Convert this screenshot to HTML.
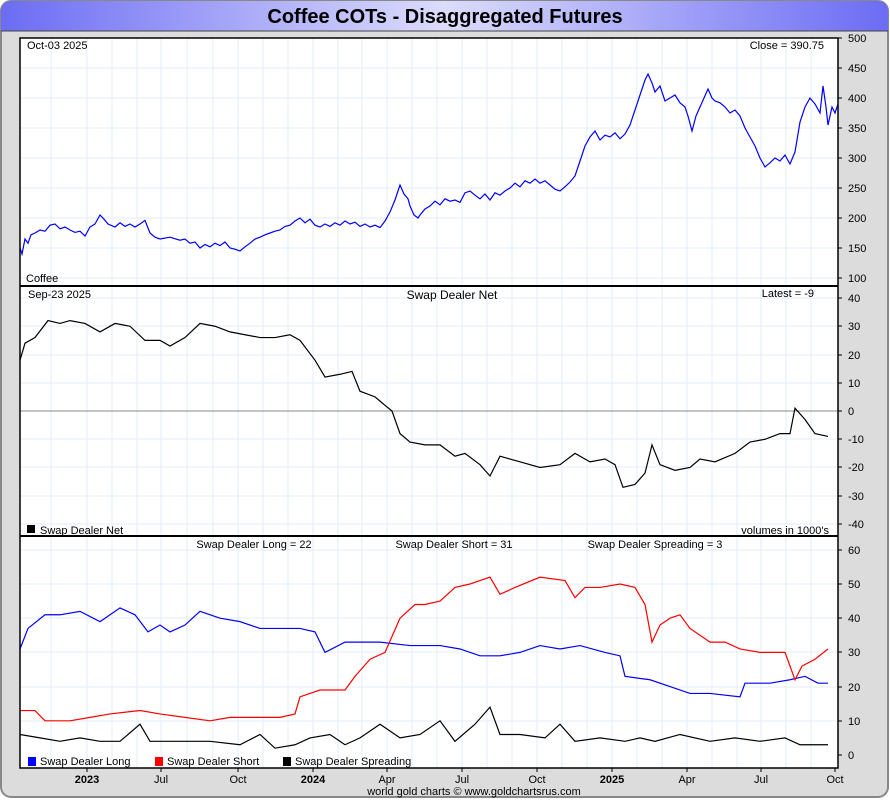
<!DOCTYPE html>
<html><head><meta charset="utf-8"><style>
body{margin:0;background:#fff;width:890px;height:800px;overflow:hidden;font-family:"Liberation Sans",sans-serif}
svg text{font-family:"Liberation Sans",sans-serif;font-size:11px;fill:#000}
</style></head><body>
<svg width="890" height="800" xmlns="http://www.w3.org/2000/svg">
<defs>
<linearGradient id="tg" x1="0" x2="1" y1="0" y2="0">
<stop offset="0" stop-color="#6c6cf4"/><stop offset="0.5" stop-color="#dcdcfc"/><stop offset="1" stop-color="#6c6cf4"/>
</linearGradient>
</defs>
<rect x="1" y="1" width="887" height="796" rx="10" fill="#dcdcdc" stroke="#888" stroke-width="2"/>
<path d="M1,31 V11 a10,10 0 0 1 10,-10 H878 a10,10 0 0 1 10,10 V31 Z" fill="url(#tg)"/>
<line x1="1" y1="31" x2="888" y2="31" stroke="#444" stroke-width="1"/>
<text x="445" y="23" text-anchor="middle" style="font-size:20px;font-weight:bold">Coffee COTs - Disaggregated Futures</text>
<rect x="20" y="38" width="818" height="730" fill="#fff"/>
<g stroke="#e2eef8" stroke-width="1">
<path d="M51,38V768M87,38V768M112,38V768M137,38V768M161,38V768M187,38V768M213,38V768M238,38V768M263,38V768M288,38V768M313,38V768M338,38V768M362,38V768M387,38V768M412,38V768M437,38V768M462,38V768M487,38V768M512,38V768M537,38V768M562,38V768M587,38V768M612,38V768M637,38V768M662,38V768M687,38V768M712,38V768M737,38V768M761,38V768M786,38V768M811,38V768"/>
<path d="M20,68H838M20,98H838M20,128H838M20,158H838M20,188H838M20,218H838M20,248H838M20,278H838"/>
<path d="M20,298H838M20,326H838M20,355H838M20,383H838M20,439H838M20,467H838M20,496H838M20,524H838"/>
<path d="M20,550H838M20,584H838M20,618H838M20,652H838M20,687H838M20,721H838"/>
</g>
<line x1="20" y1="411" x2="838" y2="411" stroke="#888"/>
<g fill="none" stroke-width="1.2">
<g transform="translate(0,338) scale(1,-0.6)"><polyline stroke="#00f" vector-effect="non-scaling-stroke" points="20,150 22,140 25,165 28,158 31,172 35,175 40,180 45,178 50,188 55,190 60,182 65,185 70,180 75,176 80,178 85,170 90,185 95,190 100,205 104,198 108,190 115,185 120,192 125,186 130,190 135,185 140,190 145,196 150,175 155,168 160,165 170,168 180,163 185,165 190,158 195,160 200,150 205,156 210,152 215,158 220,154 225,160 230,150 235,148 240,145 245,152 250,158 255,165 260,168 265,172 270,175 275,178 280,180 285,186 290,188 295,195 300,200 305,192 310,198 315,188 320,185 325,190 330,186 335,192 340,188 345,195 350,190 355,193 360,186 365,190 370,185 375,188 380,184 385,195 390,210 395,230 398,245 400,255 404,240 408,232 410,220 414,205 418,200 420,205 425,215 430,220 435,228 440,222 445,232 450,228 455,230 460,226 465,242 470,245 475,238 480,232 485,240 490,230 495,242 500,238 505,245 510,250 515,258 520,252 525,262 530,258 535,265 540,258 545,262 550,255 555,248 560,245 565,252 570,260 575,270 580,295 585,320 590,335 595,345 600,330 605,338 610,335 615,342 620,332 625,340 630,355 635,380 640,405 645,430 648,440 652,425 655,410 660,420 665,395 670,400 675,405 680,392 685,385 688,370 692,345 696,370 700,385 704,400 708,415 712,400 715,395 720,392 725,385 730,375 735,380 740,370 745,350 750,335 755,320 760,300 765,285 770,292 775,300 780,295 785,305 790,290 795,310 800,360 805,385 810,400 815,390 820,375 823,420 826,385 828,355 832,385 835,375 838,390"/></g>
<g transform="translate(0,411) scale(1,-2.825)"><polyline stroke="#000" vector-effect="non-scaling-stroke" points="20,18 25,24 35,26 48,32 60,31 70,32 85,31 100,28 115,31 130,30 145,25 160,25 170,23 185,26 200,31 215,30 230,28 245,27 260,26 275,26 290,27 300,25 315,18 325,12 340,13 352,14 360,7 375,5 385,2 392,0 400,-8 410,-11 425,-12 440,-12 455,-16 465,-15 480,-19 490,-23 500,-16 520,-18 540,-20 560,-19 575,-15 590,-18 605,-17 615,-19 623,-27 635,-26 645,-22 652,-12 660,-19 675,-21 690,-20 700,-17 715,-18 735,-15 750,-11 765,-10 780,-8 790,-8 795,1 805,-3 815,-8 828,-9"/></g>
<g transform="translate(0,755) scale(1,-3.42)">
<polyline stroke="#00f" vector-effect="non-scaling-stroke" points="20,31 28,37 45,41 60,41 80,42 100,39 120,43 135,41 148,36 160,38 170,36 185,38 200,42 220,40 240,39 260,37 280,37 300,37 315,36 325,30 345,33 380,33 410,32 440,32 460,31 480,29 500,29 520,30 540,32 560,31 580,32 605,30 620,29 625,23 650,22 670,20 690,18 710,18 740,17 745,21 770,21 790,22 805,23 818,21 828,21"/>
<polyline stroke="#f00" vector-effect="non-scaling-stroke" points="20,13 35,13 45,10 70,10 90,11 110,12 140,13 160,12 185,11 210,10 230,11 255,11 280,11 295,12 300,17 320,19 345,19 355,23 370,28 385,30 400,40 415,44 425,44 440,45 455,49 470,50 480,51 490,52 500,47 515,49 540,52 565,51 575,46 585,49 600,49 620,50 635,49 645,44 652,33 660,38 670,40 680,41 690,37 700,35 710,33 725,33 740,31 760,30 785,30 795,22 802,26 815,28 828,31"/>
<polyline stroke="#000" vector-effect="non-scaling-stroke" points="20,6 40,5 60,4 80,5 100,4 120,4 140,9 150,4 170,4 190,4 210,4 240,3 260,6 275,2 295,3 310,5 330,6 345,3 360,5 380,9 400,5 420,6 440,10 455,4 475,9 490,14 500,6 520,6 545,5 560,9 575,4 600,5 625,4 640,5 655,4 680,6 710,4 735,5 760,4 785,5 800,3 815,3 828,3"/>
</g>
</g>
<rect x="20" y="38" width="818" height="730" fill="none" stroke="#000" stroke-width="1.5"/>
<line x1="20" y1="286" x2="838" y2="286" stroke="#000" stroke-width="2"/>
<line x1="20" y1="536" x2="838" y2="536" stroke="#000" stroke-width="2"/>
<g stroke="#000"><path d="M838,38h4M838,68h4M838,98h4M838,128h4M838,158h4M838,188h4M838,218h4M838,248h4M838,278h4M838,298h4M838,326h4M838,355h4M838,383h4M838,411h4M838,439h4M838,467h4M838,496h4M838,524h4M838,550h4M838,584h4M838,618h4M838,652h4M838,687h4M838,721h4M838,755h4"/></g>
<g style="font-size:11px">
<text x="848" y="42">500</text><text x="848" y="72">450</text><text x="848" y="102">400</text><text x="848" y="132">350</text><text x="848" y="162">300</text><text x="848" y="192">250</text><text x="848" y="222">200</text><text x="848" y="252">150</text><text x="848" y="282">100</text>
<text x="848" y="302">40</text><text x="848" y="330">30</text><text x="848" y="359">20</text><text x="848" y="387">10</text><text x="848" y="415">0</text><text x="848" y="443">-10</text><text x="848" y="471">-20</text><text x="848" y="500">-30</text><text x="848" y="528">-40</text>
<text x="848" y="554">60</text><text x="848" y="588">50</text><text x="848" y="622">40</text><text x="848" y="656">30</text><text x="848" y="691">20</text><text x="848" y="725">10</text><text x="848" y="759">0</text>
</g>
<text x="27" y="49">Oct-03  2025</text>
<text x="824" y="49" text-anchor="end">Close = 390.75</text>
<text x="26" y="282">Coffee</text>
<text x="28" y="298">Sep-23  2025</text>
<text x="452" y="299" text-anchor="middle" style="font-size:12px">Swap Dealer Net</text>
<text x="814" y="297" text-anchor="end">Latest = -9</text>
<rect x="27" y="525" width="8" height="8" fill="#000"/><text x="40" y="534">Swap Dealer Net</text>
<text x="829" y="534" text-anchor="end">volumes in 1000's</text>
<text x="254" y="548" text-anchor="middle">Swap Dealer Long = 22</text>
<text x="454" y="548" text-anchor="middle">Swap Dealer Short = 31</text>
<text x="655" y="548" text-anchor="middle">Swap Dealer Spreading = 3</text>
<rect x="28" y="757" width="8" height="9" fill="#00f"/><text x="40" y="765">Swap Dealer Long</text>
<rect x="155" y="757" width="8" height="9" fill="#f00"/><text x="167" y="765">Swap Dealer Short</text>
<rect x="283" y="757" width="8" height="9" fill="#000"/><text x="295" y="765">Swap Dealer Spreading</text>
<g stroke="#000"><path d="M87,768v4M161,768v4M238,768v4M313,768v4M387,768v4M462,768v4M537,768v4M612,768v4M687,768v4M761,768v4M835,768v4"/></g>
<g text-anchor="middle">
<text x="87" y="783" style="font-weight:bold">2023</text><text x="161" y="783">Jul</text><text x="238" y="783">Oct</text><text x="313" y="783" style="font-weight:bold">2024</text><text x="387" y="783">Apr</text><text x="462" y="783">Jul</text><text x="537" y="783">Oct</text><text x="612" y="783" style="font-weight:bold">2025</text><text x="687" y="783">Apr</text><text x="761" y="783">Jul</text><text x="835" y="783">Oct</text>
<text x="474" y="795">world gold charts © www.goldchartsrus.com</text>
</g>
</svg>
</body></html>
